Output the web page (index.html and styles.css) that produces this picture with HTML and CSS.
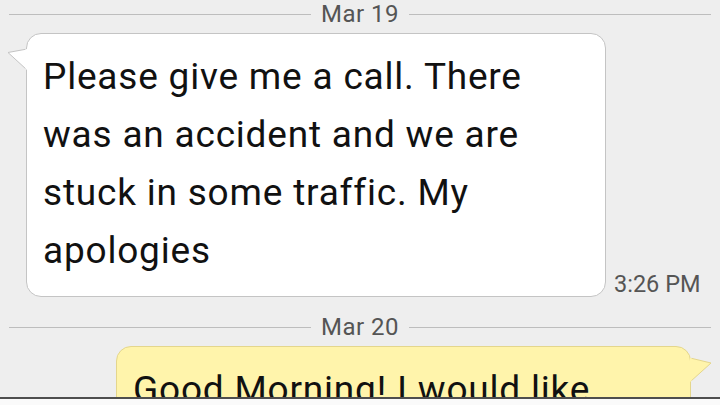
FILE: index.html
```html
<!DOCTYPE html>
<html lang="en">
<head>
    <meta charset="UTF-8">
    <meta name="viewport" content="width=device-width, initial-scale=1.0">
    <title>Messages</title>
    <link rel="stylesheet" href="styles.css">
</head>
<body>
<div class="thread">
    <div class="date-sep">
        <span class="date-line"></span>
        <span class="date-text">Mar 19</span>
        <span class="date-line"></span>
    </div>

    <div class="msg-row incoming">
        <div class="bubble bubble-in">
            <svg class="tail tail-in" width="20" height="24" viewBox="0 0 20 24">
                <path d="M20 2 L1 5.5 L20 23 Z" fill="#ffffff"/>
                <path d="M18.5 2.3 L1 5.5 L18.5 21.6" fill="none" stroke="#c4c4c4" stroke-width="1"/>
            </svg>
            <p class="bubble-text">Please give me a call. There was an accident and we are stuck in some traffic. My apologies</p>
        </div>
        <span class="msg-time">3:26 PM</span>
    </div>

    <div class="date-sep date-sep-next">
        <span class="date-line"></span>
        <span class="date-text">Mar 20</span>
        <span class="date-line"></span>
    </div>

    <div class="msg-row outgoing">
        <div class="bubble bubble-out">
            <svg class="tail tail-out" width="22" height="26" viewBox="0 0 22 26">
                <path d="M0 2 L21 7 L0 26 Z" fill="#fff4ab"/>
                <path d="M1.5 2.3 L21 7 L1.5 24.6" fill="none" stroke="#e4d68c" stroke-width="1"/>
            </svg>
            <p class="bubble-text">Good Morning! I would like confirmation of our appointment today.</p>
        </div>
    </div>
</div>
<div class="bottom-bar"></div>
</body>
</html>
```

FILE: styles.css
```css
* {
    margin: 0;
    padding: 0;
    box-sizing: border-box;
}

body {
    background-color: #eeeeee;
    font-family: Roboto, "Noto Sans", sans-serif;
    overflow: hidden;
    height: 405px;
}

.thread {
    display: flex;
    flex-direction: column;
}

.date-sep {
    display: flex;
    align-items: center;
    gap: 10px;
    height: 28px;
    padding: 0 9px;
}

.date-sep-next {
    margin-top: 16px;
}

.date-line {
    flex: 1;
    height: 1px;
    background-color: #bdbdbd;
}

.date-text {
    font-size: 24px;
    color: #555555;
    letter-spacing: 0.5px;
}

.msg-row {
    display: flex;
    align-items: flex-end;
    gap: 8px;
}

.incoming {
    margin-top: 5px;
    padding-left: 26px;
}

.outgoing {
    margin-top: 5px;
    padding-left: 116px;
}

.bubble {
    position: relative;
    border-radius: 15px;
}

.bubble-in {
    width: 580px;
    height: 264px;
    background-color: #ffffff;
    border: 1px solid #c4c4c4;
    padding: 14px 16px;
}

.bubble-out {
    width: 575px;
    height: 120px;
    background-color: #fff4ab;
    border: 1px solid #e4d68c;
    padding: 14px 16px;
}

.bubble-text {
    font-size: 37px;
    line-height: 58px;
    color: #111111;
    letter-spacing: 0.8px;
}

.tail {
    position: absolute;
    display: block;
}

.tail-in {
    left: -20px;
    top: 13px;
}

.tail-out {
    right: -22px;
    top: 9px;
}

.msg-time {
    font-size: 23.5px;
    color: #555555;
    line-height: 24px;
    margin-bottom: 1px;
}

.bottom-bar {
    position: fixed;
    left: 0;
    right: 0;
    bottom: 0;
    height: 8px;
    background-color: #fafafa;
    border-top: 2px solid #4e4e4e;
}
```
